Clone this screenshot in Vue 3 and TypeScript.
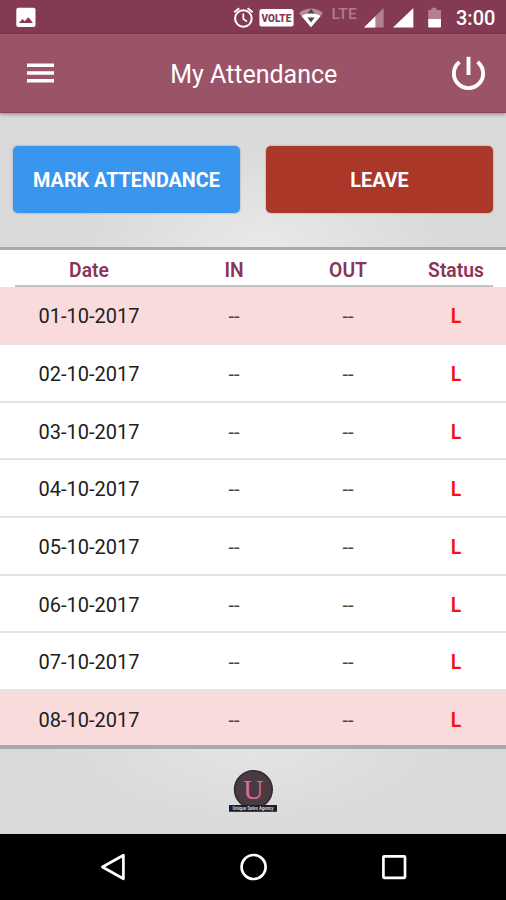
<script setup lang="ts">
interface AttendanceRow {
  date: string
  timeIn: string
  timeOut: string
  status: string
  holiday: boolean
}

const columns: string[] = ['Date', 'IN', 'OUT', 'Status']

const rows: AttendanceRow[] = Array.from({ length: 8 }, (_, i) => ({
  date: `0${i + 1}-10-2017`,
  timeIn: '--',
  timeOut: '--',
  status: 'L',
  holiday: i % 7 === 0,
}))
</script>

<template>
  <div class="screen">
    <div class="status-bar">
      <svg class="picture" width="20" height="20" viewBox="0 0 20 20">
        <rect x="0.3" y="0.8" width="19.2" height="19.2" rx="2" fill="#fff" />
        <path d="M3 16 6.4 12.1 8.7 14.3 12.4 10.3 17 16Z" fill="#843a52" />
      </svg>
      <svg class="indicators" width="216" height="34" viewBox="0 0 216 34">
        <g fill="none" stroke="#fff" stroke-width="2">
          <circle cx="11.4" cy="18.5" r="8.3" />
          <path d="M2.2 12.3 7.2 8.3M20.6 12.3 15.6 8.3" />
          <path d="M11.3 13.5V19L15 21.5" stroke-width="1.7" />
        </g>
        <rect x="27.4" y="9" width="34.2" height="17.4" rx="2.5" fill="#fff" />
        <text class="volte" x="29.6" y="21.6" textLength="29.6" lengthAdjust="spacingAndGlyphs">VOLTE</text>
        <path d="M67 13C74 7 84 7 91 13L79 27.2Z" fill="#b98a9a" />
        <path d="M69.4 16C75 12.2 83 12.2 88.6 16L79 27.2Z" fill="#fff" />
        <path d="M79 8.8 82.6 13.4H75.4ZM79 22.6 75.4 17.6H82.6Z" fill="#4e484c" />
        <text class="lte" x="99.4" y="18.6" textLength="25.4">LTE</text>
        <path d="M151.6 8V27.4H132Z" fill="#b37f91" />
        <path d="M143.4 16.2V27.4H132Z" fill="#fff" />
        <path d="M181.4 8V27.4H161Z" fill="#fff" />
        <path d="M199.5 7.7H204.5V10H209V19H196.2V10H199.5Z" fill="#b37f91" />
        <path d="M196.2 19H209V26.2Q209 27.4 207.8 27.4H197.4Q196.2 27.4 196.2 26.2Z" fill="#fff" />
      </svg>
      <span class="clock">3:00</span>
    </div>

    <header class="app-bar">
      <svg class="menu" width="27" height="20" viewBox="0 0 27 20">
        <path d="M0 2.2H27M0 10H27M0 17.8H27" stroke="#fff" stroke-width="3.4" />
      </svg>
      <h1 class="title">My Attendance</h1>
      <svg class="power" width="36" height="36" viewBox="0 0 36 36">
        <g fill="none" stroke="#fff" stroke-width="3.9">
          <path d="M18.5 1.8V20" />
          <path d="M9.5 7A14.6 14.6 0 1 0 27.5 7" />
        </g>
      </svg>
    </header>

    <section class="actions">
      <button class="btn mark" type="button">MARK ATTENDANCE</button>
      <button class="btn leave" type="button">LEAVE</button>
    </section>

    <main class="table">
      <div class="grid head">
        <span v-for="c in columns" :key="c">{{ c }}</span>
      </div>
      <div v-for="r in rows" :key="r.date" class="grid row" :class="{ holiday: r.holiday }">
        <span class="date">{{ r.date }}</span>
        <span class="time">{{ r.timeIn }}</span>
        <span class="time">{{ r.timeOut }}</span>
        <span class="status">{{ r.status }}</span>
      </div>
    </main>

    <footer class="brand">
      <svg width="50" height="48" viewBox="0 0 50 48">
        <circle cx="25.4" cy="20.5" r="18.8" fill="#4a3a43" stroke="#2c2d30" stroke-width="1.6" />
        <text class="brand-letter" x="25.4" y="30" text-anchor="middle">U</text>
        <rect x="1" y="36" width="48" height="6.8" fill="#1f1d20" />
        <text class="brand-name" x="4.5" y="41.3" textLength="41" lengthAdjust="spacingAndGlyphs">Unique Sales Agency</text>
      </svg>
    </footer>

    <nav class="nav-bar">
      <svg width="28" height="30" viewBox="0 0 28 30">
        <path d="M24.4 3.2V26.8L3.4 15Z" fill="none" stroke="#fff" stroke-width="2.7" stroke-linejoin="round" />
      </svg>
      <svg width="28" height="30" viewBox="0 0 28 30">
        <circle cx="13.6" cy="15" r="12" fill="none" stroke="#fff" stroke-width="2.7" />
      </svg>
      <svg width="28" height="30" viewBox="0 0 28 30">
        <rect x="3.4" y="4.4" width="21.6" height="21.4" rx="0.8" fill="none" stroke="#fff" stroke-width="2.7" />
      </svg>
    </nav>
  </div>
</template>

<style>
body {
  margin: 0;
}
</style>

<style scoped>
.screen {
  width: 506px;
  height: 900px;
  display: flex;
  flex-direction: column;
  overflow: hidden;
  font-family: Roboto, "Liberation Sans", sans-serif;
  background: #fff;
}
svg {
  display: block;
  flex: none;
}
.status-bar {
  height: 34px;
  flex: none;
  display: flex;
  align-items: center;
  padding: 0 11px 0 16px;
  box-sizing: border-box;
  background: #843a52;
  color: #fff;
}
.indicators {
  margin-left: auto;
}
.clock {
  width: 39px;
  margin-left: 8px;
  font-size: 20px;
  font-weight: 500;
  line-height: 34px;
  white-space: nowrap;
  padding-top: 2px;
}
.volte {
  font-size: 11.5px;
  font-weight: 900;
  fill: #843a52;
}
.lte {
  font-size: 15.5px;
  font-weight: 500;
  fill: #b17b8e;
}
.app-bar {
  position: relative;
  z-index: 1;
  height: 79px;
  flex: none;
  box-sizing: border-box;
  display: flex;
  align-items: center;
  justify-content: space-between;
  padding: 0 20px 0 26.5px;
  background: #9b5368;
  border-bottom: 1px solid #8d4459;
  box-shadow: 0 1px 4px rgba(0, 0, 0, 0.4);
}
.title {
  margin: 4px 0 0 4px;
  font-size: 25px;
  font-weight: 400;
  line-height: 30px;
  color: #fff;
}
.actions {
  height: 137px;
  flex: none;
  box-sizing: border-box;
  display: flex;
  gap: 26px;
  padding: 33px 13px 0;
  border-bottom: 3px solid #a9a9a9;
  background: radial-gradient(ellipse 190px 110px at 52% 100%, #e9e9e9, #d9d9d9);
}
.btn {
  flex: 1;
  height: 67px;
  padding: 2px 0 0;
  border: 0;
  border-radius: 5px;
  color: #fff;
  font-family: inherit;
  font-size: 19.8px;
  font-weight: 700;
  box-shadow: 0 0 2px rgba(0, 0, 0, 0.35);
}
.mark {
  background: #3996ef;
}
.leave {
  background: #ab3728;
}
.table {
  height: 495px;
  flex: none;
  overflow: hidden;
}
.grid {
  display: grid;
  grid-template-columns: 178px 112px 116px 100px;
  align-items: center;
  text-align: center;
}
.head {
  height: 37.3px;
  box-sizing: border-box;
  padding-top: 3px;
  font-size: 19.3px;
  font-weight: 600;
  color: #8b3455;
  background: linear-gradient(#c4c4c4, #c4c4c4) 15px 100% / 478px 2px no-repeat;
}
.row {
  height: 57.65px;
  box-sizing: border-box;
  padding-top: 2.5px;
  border-bottom: 2px solid #e3e3e3;
  font-size: 20px;
  color: #202020;
}
.holiday {
  background: #fadbdc;
}
.time {
  color: #444;
}
.status {
  padding-top: 1px;
  font-size: 19.5px;
  font-weight: 600;
  color: #f51212;
}
.brand {
  height: 89px;
  flex: none;
  box-sizing: border-box;
  display: flex;
  justify-content: center;
  padding-top: 20px;
  border-top: 4px solid #a9abaa;
  background: radial-gradient(ellipse 200px 80px at 50% 0, #e4e4e4, #d9d9d9);
}
.brand-letter {
  font-family: "Liberation Serif", serif;
  font-size: 28px;
  fill: #dc6f93;
}
.brand-name {
  font-size: 5px;
  font-weight: 700;
  fill: #d5d5d5;
}
.nav-bar {
  flex: 1;
  display: flex;
  justify-content: space-between;
  align-items: center;
  padding: 0 98px 0 99px;
  background: #000;
}
</style>
